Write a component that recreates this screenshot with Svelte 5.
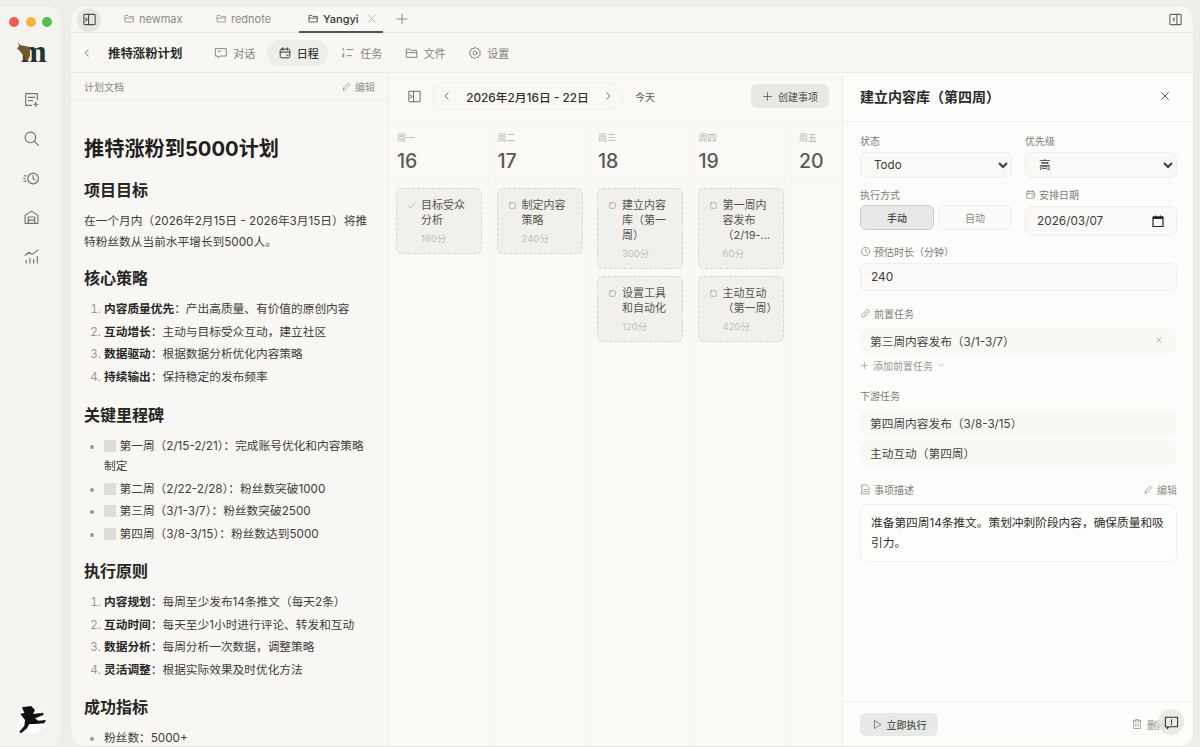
<script>
  const icons = {
    panelL: '<rect x="2" y="2.5" width="12" height="11" rx="1"/><path d="M7 2.5v11M4 6.5 5.5 8 4 9.5"/>',
    panelR: '<rect x="2" y="2.5" width="12" height="11" rx="1"/><path d="M9.5 2.5v11M7 6.5 5.5 8 7 9.5"/>',
    folder: '<path d="M1.5 12.5v-9h4l1.5 1.5h6.5v7.5z"/><path d="M1.5 7.5h12"/>',
    x: '<path d="m3.5 3.5 9 9M12.5 3.5l-9 9"/>',
    plus: '<path d="M8 2.5v11M2.5 8h11"/>',
    left: '<path d="M10 3 5 8l5 5"/>',
    right: '<path d="m6 3 5 5-5 5"/>',
    down: '<path d="m3.5 6 4.5 4.5L12.5 6"/>',
    chat: '<path d="M2 3h12v8.5H6.5L4.5 13.5v-2H2zM4.5 6h3"/>',
    cal: '<rect x="2.5" y="3.5" width="11" height="10" rx="1.5"/><path d="M5.5 2v3M10.5 2v3M2.5 7h11M10 10.5h1.5"/>',
    tasks: '<path d="M2.5 2.5V5M2 9h1.5v1.5H2v2h1.5M7 4h7M7 11h5"/>',
    gear: '<circle cx="8" cy="8" r="2.2"/><path d="M8 1.5 9.6 3l2.2-.2.5 2.100 1.900 1.100L13.400 8l.8 2-1.900 1.100-.5 2.100-2.200-.2L8 14.500 6.400 13l-2.200.2-.5-2.100L1.800 10l.8-2-.8-2 1.900-1.100.5-2.100 2.200.2z"/>',
    pencil: '<path d="m3 13 .6-3L10.8 2.8l2.4 2.4L6 12.4z"/>',
    check: '<path d="m2.5 8.500 3.500 3.500 7.500-8.500"/>',
    square: '<rect x="3" y="3" width="10" height="10" rx="1"/>',
    note: '<path d="M13.5 8V2.500h-11v11H8M5 6h6M5 9h4M12 10.500v4M10 12.500h4"/>',
    search: '<circle cx="7" cy="7" r="5"/><path d="m11 11 3.500 3.500"/>',
    history: '<circle cx="9.500" cy="8" r="5"/><path d="M9.500 5v3l2 1.500M1 5.500h2M.5 8h1.500M1 10.500h2"/>',
    archive: '<path d="M2 13.500V6l6-4 6 4v7.500zM5 13.500v-6h6v6M5 10.500h6"/>',
    chart: '<path d="m2 7 3.500-3 3 2L14 2M3 14v-2.500M6.500 14v-4M10 14v-3M13.500 14V8"/>',
    clock: '<circle cx="8" cy="8" r="6"/><path d="M8 4.500V8l2.500 1.500"/>',
    link: '<path d="M6.500 9.500a2.500 2.500 0 0 0 3.500 0l3-3A2.500 2.500 0 0 0 9.500 3L8 4.500M9.500 6.500a2.500 2.500 0 0 0-3.500 0l-3 3A2.500 2.500 0 0 0 6.500 13L8 11.500"/>',
    doc: '<path d="M3 1.500h6.500L13 5v9.500H3zM5.500 8h5M5.500 11h5"/>',
    play: '<path d="M4 2.500 13 8l-9 5.500z"/>',
    trash: '<path d="M2.500 4h11M6 4V2h4v2M3.500 4v10h9V4M6.500 7v4M9.500 7v4"/>',
    alert: '<path d="M1.500 2.500h13v10h-9l-2 2v-2h-2zM8 5v3.500M8 10v.5"/>'
  };

  const tabs = [
    { name: "newmax" },
    { name: "rednote" },
    { name: "Yangyi", active: true }
  ];

  const navItems = [
    { icon: "chat", label: "对话" },
    { icon: "cal", label: "日程", active: true },
    { icon: "tasks", label: "任务" },
    { icon: "folder", label: "文件" },
    { icon: "gear", label: "设置" }
  ];

  const strategy = [
    ["内容质量优先", "产出高质量、有价值的原创内容"],
    ["互动增长", "主动与目标受众互动，建立社区"],
    ["数据驱动", "根据数据分析优化内容策略"],
    ["持续输出", "保持稳定的发布频率"]
  ];

  const milestones = [
    "第一周（2/15-2/21）：完成账号优化和内容策略制定",
    "第二周（2/22-2/28）：粉丝数突破1000",
    "第三周（3/1-3/7）：粉丝数突破2500",
    "第四周（3/8-3/15）：粉丝数达到5000"
  ];

  const principles = [
    ["内容规划", "每周至少发布14条推文（每天2条）"],
    ["互动时间", "每天至少1小时进行评论、转发和互动"],
    ["数据分析", "每周分析一次数据，调整策略"],
    ["灵活调整", "根据实际效果及时优化方法"]
  ];

  const days = [
    { week: "周一", date: 16, cards: [{ title: "目标受众分析", min: 180, done: true }] },
    { week: "周二", date: 17, cards: [{ title: "制定内容策略", min: 240 }] },
    {
      week: "周三",
      date: 18,
      cards: [
        { title: "建立内容库（第一周）", min: 300 },
        { title: "设置工具和自动化", min: 120 }
      ]
    },
    {
      week: "周四",
      date: 19,
      cards: [
        { title: "第一周内容发布（2/19-2/25）", min: 60 },
        { title: "主动互动（第一周）", min: 420 }
      ]
    },
    { week: "周五", date: 20, cards: [] }
  ];
</script>

{#snippet icon(name, size = 14, sw = 1.2)}
  <svg class="icon" width={size} height={size} viewBox="0 0 16 16" fill="none" stroke="currentColor" stroke-width={sw} stroke-linecap="round" stroke-linejoin="round">{@html icons[name]}</svg>
{/snippet}

<div class="app">
  <aside class="rail">
    <div class="lights"><i class="red"></i><i class="yellow"></i><i class="green"></i></div>
    <div class="logo">
      <span>m</span>
      <svg width="14" height="18" viewBox="0 0 14 18"><path d="M1 0l2 3 5 1 5 1v9l-2 4H8l-1-5-2-1-3-4-2-1 2-3z" fill="#6b5a32"/></svg>
    </div>
    <div class="rail-icons">
      {#each ["note", "search", "history", "archive", "chart"] as name}
        <div class="rail-icon">{@render icon(name, 17, 1.1)}</div>
      {/each}
    </div>
    <div class="avatar">
      <svg width="30" height="30" viewBox="0 0 30 30">
        <circle cx="15.7" cy="15.7" r="13" fill="#fff"/>
        <path d="M6 2.300 15 1l4 4-2 4 10-1.300.7 2.300-8.700 3.300 3.300 2.400 7.700-.7-1.700 3.300-9.300.7h-5.700L11 23.300 5 28.300l-1.700-1.600 5-5.700.7-6-4.700-6 4-1.300z" fill="#111"/>
      </svg>
    </div>
  </aside>

  <main class="main">
    <div class="tabbar">
      <button class="side-toggle">{@render icon("panelL", 15, 1.2)}</button>
      <div class="tabs">
        {#each tabs as tab}
          <div class="tab" class:active={tab.active}>
            {@render icon("folder", 11, 1.1)}
            <span>{tab.name}</span>
            {#if tab.active}<span class="tab-x">{@render icon("x", 13, 0.9)}</span>{/if}
          </div>
        {/each}
        <span class="tab-add">{@render icon("plus", 14, 1)}</span>
      </div>
      <span class="right-toggle">{@render icon("panelR", 15, 1.2)}</span>
    </div>

    <div class="toolbar">
      <span class="back">{@render icon("left", 10, 1.3)}</span>
      <strong class="plan-title">推特涨粉计划</strong>
      <nav class="nav">
        {#each navItems as item}
          <div class="nav-item" class:active={item.active}>
            {@render icon(item.icon, 14, 1.1)}
            <span>{item.label}</span>
          </div>
        {/each}
      </nav>
    </div>

    <div class="panes">
      <section class="doc">
        <header class="doc-head">
          <span>计划文档</span>
          <span class="edit">{@render icon("pencil", 11, 1.1)}编辑</span>
        </header>
        <article class="doc-body">
          <h1>推特涨粉到5000计划</h1>
          <h2 class="first">项目目标</h2>
          <p>在一个月内（2026年2月15日 - 2026年3月15日）将推特粉丝数从当前水平增长到5000人。</p>
          <h2 class="after-p">核心策略</h2>
          <ol>
            {#each strategy as [head, rest]}
              <li><b>{head}</b>：{rest}</li>
            {/each}
          </ol>
          <h2 class="wide">关键里程碑</h2>
          <ul>
            {#each milestones as m}
              <li><i class="box"></i>{m}</li>
            {/each}
          </ul>
          <h2>执行原则</h2>
          <ol>
            {#each principles as [head, rest]}
              <li><b>{head}</b>：{rest}</li>
            {/each}
          </ol>
          <h2>成功指标</h2>
          <ul>
            <li>粉丝数：5000+</li>
          </ul>
        </article>
      </section>

      <section class="calendar">
        <div class="cal-bar">
          <span class="cal-toggle">{@render icon("panelL", 15, 1.1)}</span>
          <div class="range">
            <span>{@render icon("left", 10, 1.3)}</span>
            <b>2026年2月16日 - 22日</b>
            <span>{@render icon("right", 10, 1.3)}</span>
          </div>
          <span class="today">今天</span>
          <button class="create">{@render icon("plus", 11, 1.1)}创建事项</button>
        </div>
        <div class="week">
          {#each days as day}
            <div class="day">
              <div class="day-head">
                <span>{day.week}</span>
                <b>{day.date}</b>
              </div>
              <div class="day-cards">
                {#each day.cards as card}
                  <div class="card">
                    <span class="card-mark">{@render icon(card.done ? "check" : "square", 9, 1)}</span>
                    <div class="card-text">
                      <div class="card-title">{card.title}</div>
                      <div class="card-min">{card.min}分</div>
                    </div>
                  </div>
                {/each}
              </div>
            </div>
          {/each}
        </div>
      </section>

      <section class="detail">
        <header class="detail-head">
          <h3>建立内容库（第四周）</h3>
          {@render icon("x", 12, 1.3)}
        </header>
        <div class="detail-body">
          <div class="two">
            <div>
              <div class="label">状态</div>
              <select class="field-select"><option>Todo</option><option>Doing</option><option>Done</option></select>
            </div>
            <div>
              <div class="label">优先级</div>
              <select class="field-select"><option>高</option><option>中</option><option>低</option></select>
            </div>
          </div>
          <div class="two second">
            <div>
              <div class="label">执行方式</div>
              <div class="modes">
                <button class="mode on">手动</button>
                <button class="mode">自动</button>
              </div>
            </div>
            <div>
              <div class="label">{@render icon("cal", 11, 1)}安排日期</div>
              <div class="date-field">
                <span>2026/03/07</span>
                <svg width="12" height="12" viewBox="0 0 12 12"><path d="M1 2h10v9.500H1z" fill="none" stroke="#222" stroke-width="1.2"/><path d="M1 1.500h10V4H1zM3 .5h1v2H3zM8 .5h1v2H8z" fill="#222"/></svg>
              </div>
            </div>
          </div>

          <div class="label minutes">{@render icon("clock", 11, 1)}预估时长（分钟）</div>
          <input class="number" value="240" />

          <div class="label pre">{@render icon("link", 11, 1)}前置任务</div>
          <div class="dep">
            <span>第三周内容发布（3/1-3/7）</span>
            <span class="dep-x">{@render icon("x", 8, 1.2)}</span>
          </div>
          <div class="add-dep">{@render icon("plus", 9, 1.2)}添加前置任务{@render icon("down", 8, 1.2)}</div>

          <div class="label next">下游任务</div>
          <div class="dep"><span>第四周内容发布（3/8-3/15）</span></div>
          <div class="dep gap"><span>主动互动（第四周）</span></div>

          <div class="label desc">
            <span class="label-left">{@render icon("doc", 11, 1)}事项描述</span>
            <span class="edit">{@render icon("pencil", 11, 1.1)}编辑</span>
          </div>
          <div class="desc-box">准备第四周14条推文。策划冲刺阶段内容，确保质量和吸引力。</div>
        </div>
        <footer class="detail-foot">
          <button class="run">{@render icon("play", 11, 1)}立即执行</button>
          <span class="delete">{@render icon("trash", 12, 1)}删除</span>
        </footer>
      </section>
    </div>

    <button class="feedback">{@render icon("alert", 15, 1.1)}</button>
  </main>
</div>

<style>
  :global(body) {
    margin: 0;
    background: #efeeea;
  }

  .app {
    display: flex;
    width: 1200px;
    height: 747px;
    overflow: hidden;
    color: #2b2b29;
    font-family: Inter, "Noto Sans CJK SC", sans-serif;
    font-size: 11.7px;
  }

  .icon {
    flex: none;
    display: block;
  }

  button {
    font-family: inherit;
    border: none;
    padding: 0;
    cursor: pointer;
  }

  /* left rail */
  .rail {
    width: 63px;
    flex: none;
    margin-top: 5px;
    display: flex;
    flex-direction: column;
    align-items: center;
    background: #f4f3ef;
    border: 1px solid #ebeae6;
    border-left: none;
    border-radius: 0 14px 14px 0;
    box-sizing: border-box;
  }

  .lights {
    display: flex;
    gap: 6.5px;
    margin-top: 11px;
    margin-right: 1px;
  }

  .lights i {
    width: 10px;
    height: 10px;
    border-radius: 50%;
  }

  .red { background: #ee5c54; }
  .yellow { background: #f3b340; }
  .green { background: #56bd52; }

  .logo {
    position: relative;
    width: 31px;
    height: 26px;
    margin-top: 14px;
    text-align: right;
    font: bold 31px/22px "Liberation Serif", serif;
    color: #22352d;
  }

  .logo svg {
    position: absolute;
    left: 1px;
    top: 1px;
  }

  .rail-icons {
    margin-top: 13px;
    color: #75746f;
  }

  .rail-icon {
    height: 39.25px;
    display: flex;
    align-items: center;
  }

  .avatar {
    margin-top: auto;
    margin-bottom: 11px;
    height: 30px;
  }

  /* main window */
  .main {
    position: relative;
    flex: 1;
    margin: 5px 6px 0 7px;
    height: 742px;
    display: flex;
    flex-direction: column;
    background: #f8f7f4;
    border: 1px solid #e9e8e4;
    border-radius: 14px;
    box-sizing: border-box;
    overflow: hidden;
  }

  .tabbar {
    flex: none;
    height: 26px;
    display: flex;
    align-items: center;
    border-bottom: 1px solid #ecebe7;
  }

  .side-toggle {
    width: 24px;
    height: 24px;
    margin: 1px 0 0 6px;
    border-radius: 50%;
    background: #e7e6e2;
    color: #45524b;
    display: flex;
    align-items: center;
    justify-content: center;
  }

  .tabs {
    display: flex;
    height: 100%;
    align-items: stretch;
    margin-left: 14px;
    flex: 1;
  }

  .tab {
    display: flex;
    align-items: center;
    gap: 4px;
    padding: 0 9px;
    width: 84px;
    box-sizing: border-box;
    color: #8a8984;
    font-size: 11px;
    margin-right: 8px;
    border-bottom: 2px solid transparent;
    height: 27px;
  }

  .tab.active {
    color: #2f3a34;
    font-weight: 500;
    border-bottom-color: #43594c;
  }

  .tab-x {
    color: #a9a8a3;
    margin-left: 2px;
  }

  .tab-add {
    align-self: center;
    color: #807f7a;
    margin-left: 4px;
  }

  .right-toggle {
    margin-right: 10px;
    color: #66655f;
  }

  .toolbar {
    flex: none;
    height: 40px;
    display: flex;
    align-items: center;
    box-sizing: border-box;
    border-bottom: 1px solid #ecebe7;
    padding-left: 11px;
  }

  .back {
    color: #5f5e59;
  }

  .plan-title {
    margin-left: 16px;
    font-size: 12.4px;
    font-weight: 600;
    color: #2b2b29;
  }

  .nav {
    display: flex;
    gap: 2.5px;
    margin-left: 21px;
  }

  .nav-item {
    width: 61px;
    height: 26px;
    box-sizing: border-box;
    padding-left: 11px;
    display: flex;
    align-items: center;
    gap: 5px;
    border-radius: 13px;
    font-size: 11px;
    color: #83827d;
  }

  .nav-item.active {
    background: #eeedea;
    color: #2e3a33;
    font-weight: 500;
  }

  .panes {
    flex: 1;
    min-height: 0;
    display: flex;
  }

  /* plan document */
  .doc {
    width: 318px;
    flex: none;
    box-sizing: border-box;
    border-right: 1px solid #ecebe7;
    overflow: hidden;
  }

  .doc-head {
    height: 28px;
    box-sizing: border-box;
    padding: 0 13px;
    display: flex;
    align-items: center;
    justify-content: space-between;
    border-bottom: 1px solid #efeeea;
    font-size: 10px;
    color: #8a8984;
  }

  .edit {
    display: inline-flex;
    align-items: center;
    gap: 3px;
    font-size: 10px;
    font-weight: 400;
    color: #8f8e89;
  }

  .doc-body {
    padding: 0 17px 0 13px;
  }

  h1 {
    margin: 33.5px 0 0;
    font-size: 20.2px;
    line-height: 28px;
    font-weight: 700;
    color: #1f1f1d;
  }

  h2 {
    margin: 15.5px 0 0;
    font-size: 16px;
    line-height: 24px;
    font-weight: 600;
    color: #262624;
  }

  h2.first {
    margin-top: 15px;
  }

  h2.after-p {
    margin-top: 13.5px;
  }

  h2.wide {
    margin-top: 16.5px;
  }

  p {
    margin: 9px 0 0;
    line-height: 21px;
    color: #3d3d3a;
  }

  ol, ul {
    margin: 9px 0 0;
    padding-left: 20px;
    display: flex;
    flex-direction: column;
    gap: 2.5px;
    color: #3d3d3a;
  }

  li {
    line-height: 20px;
  }

  li::marker {
    color: #9a9994;
  }

  li b {
    font-weight: 600;
    color: #282826;
  }

  .box {
    display: inline-block;
    width: 12px;
    height: 12px;
    margin-right: 3.5px;
    vertical-align: -2px;
    background: #dcdcda;
    border-radius: 1px;
  }

  /* calendar */
  .calendar {
    width: 453px;
    flex: none;
    display: flex;
    flex-direction: column;
    background: #faf9f6;
    overflow: hidden;
  }

  .cal-bar {
    height: 49px;
    flex: none;
    display: flex;
    align-items: center;
    padding: 0 13px 2px 18px;
    border-bottom: 1px solid #f3f2ee;
    box-sizing: border-box;
  }

  .cal-toggle {
    color: #6f6e69;
  }

  .range {
    width: 191px;
    height: 28px;
    margin-left: 10px;
    box-sizing: border-box;
    padding: 0 9px;
    display: flex;
    align-items: center;
    justify-content: space-between;
    border: 1px solid #f0efeb;
    border-radius: 14px;
    color: #55544f;
  }

  .range b {
    font-size: 11.8px;
    font-weight: 500;
    color: #2f2f2c;
  }

  .today {
    margin-left: 12px;
    font-size: 10px;
    color: #5c5b56;
  }

  .create {
    margin-left: auto;
    width: 78px;
    height: 24px;
    display: flex;
    align-items: center;
    justify-content: center;
    gap: 5px;
    background: #e8e9e5;
    border-radius: 6px;
    font-size: 10px;
    color: #454f49;
  }

  .week {
    flex: 1;
    display: flex;
  }

  .day {
    width: 100.5px;
    flex: none;
    box-sizing: border-box;
    border-right: 1px solid #f4f3ef;
  }

  .day-head {
    height: 59px;
    box-sizing: border-box;
    padding: 10px 0 0 8px;
    border-bottom: 1px solid #f4f3ef;
    display: flex;
    flex-direction: column;
  }

  .day-head span {
    font-size: 9px;
    line-height: 12px;
    color: #b5b4af;
  }

  .day-head b {
    margin-top: 5px;
    font-size: 19.5px;
    line-height: 24px;
    font-weight: 500;
    color: #5b5a56;
  }

  .day-cards {
    padding: 7px 7px 0;
    display: flex;
    flex-direction: column;
    gap: 7px;
  }

  .card {
    display: flex;
    gap: 5px;
    width: 86px;
    box-sizing: border-box;
    padding: 9px 7px 7px 10px;
    background: #f1f0ed;
    border: 1px dashed #d6d5d1;
    border-radius: 6px;
  }

  .card-mark {
    margin-top: 3px;
    color: #8f8e89;
  }

  .card-text {
    min-width: 0;
  }

  .card-title {
    font-size: 11px;
    line-height: 15px;
    color: #55544f;
    display: -webkit-box;
    -webkit-box-orient: vertical;
    -webkit-line-clamp: 3;
    overflow: hidden;
  }

  .card-min {
    margin-top: 4px;
    font-size: 9.5px;
    line-height: 14px;
    color: #bfbeb9;
  }

  /* task detail */
  .detail {
    flex: 1;
    min-width: 0;
    display: flex;
    flex-direction: column;
    background: #fcfcfa;
    border-left: 1px solid #efeeea;
  }

  .detail-head {
    flex: none;
    height: 49px;
    box-sizing: border-box;
    padding: 0 22px 2px 17px;
    display: flex;
    align-items: center;
    justify-content: space-between;
    border-bottom: 1px solid #f0efeb;
    color: #55544f;
  }

  h3 {
    margin: 0;
    font-size: 14px;
    font-weight: 600;
    color: #2b2b29;
  }

  .detail-body {
    flex: 1;
    padding: 12px 16px 0 17px;
  }

  .label {
    display: flex;
    align-items: center;
    gap: 3px;
    height: 14px;
    box-sizing: border-box;
    padding-bottom: 2px;
    font-size: 10px;
    color: #7e7d78;
  }

  .two {
    display: grid;
    grid-template-columns: 152px 152px;
    gap: 13px;
  }

  .two.second {
    margin-top: 10px;
  }

  .field-select {
    width: 100%;
    height: 26px;
    margin-top: 4px;
    padding-left: 9px;
    background: #faf9f7;
    border: 1px solid #efeeea;
    border-radius: 7px;
    color: #3d3d3a;
    font-family: inherit;
    font-size: 11.6px;
  }

  .modes {
    display: flex;
    gap: 4px;
    margin-top: 3px;
  }

  .mode {
    flex: 1;
    height: 25px;
    padding-bottom: 1px;
    background: #fafaf8;
    border: 1px solid #efeeea;
    border-radius: 6px;
    font-size: 10px;
    color: #8a8984;
  }

  .mode.on {
    background: #e8e9e6;
    border-color: #c9cbc6;
    color: #3f4a44;
    font-weight: 500;
  }

  .date-field {
    height: 30px;
    margin-top: 4px;
    box-sizing: border-box;
    padding: 0 12px 0 11px;
    display: flex;
    align-items: center;
    justify-content: space-between;
    background: #faf9f7;
    border: 1px solid #efeeea;
    border-radius: 7px;
    color: #3d3d3a;
    font-size: 11.8px;
  }

  .minutes {
    margin-top: 9px;
  }

  .number {
    display: block;
    width: 100%;
    height: 28px;
    margin-top: 4px;
    box-sizing: border-box;
    padding: 0 10px;
    background: #faf9f7;
    border: 1px solid #f0efeb;
    border-radius: 7px;
    outline: none;
    color: #3d3d3a;
    font-family: inherit;
    font-size: 11.8px;
  }

  .pre {
    margin-top: 16px;
  }

  .dep {
    height: 26px;
    margin-top: 7px;
    box-sizing: border-box;
    padding: 0 14px 2px 10px;
    display: flex;
    align-items: center;
    justify-content: space-between;
    background: #f8f8f5;
    border-radius: 7px;
    color: #44443f;
  }

  .dep.gap {
    margin-top: 4px;
  }

  .dep-x {
    color: #8f8e89;
  }

  .add-dep {
    display: flex;
    align-items: center;
    gap: 4px;
    height: 14px;
    margin-top: 4px;
    font-size: 10px;
    color: #9a9994;
  }

  .next {
    margin-top: 17px;
  }

  .desc {
    margin-top: 17px;
    justify-content: space-between;
  }

  .label-left {
    display: flex;
    align-items: center;
    gap: 3px;
  }

  .desc-box {
    height: 58px;
    margin-top: 7px;
    box-sizing: border-box;
    padding: 9px 8px 9px 10px;
    line-height: 19.5px;
    background: #fdfdfb;
    border: 1px solid #f0efeb;
    border-radius: 7px;
    color: #2f2f2c;
  }

  .detail-foot {
    flex: none;
    height: 45px;
    box-sizing: border-box;
    padding: 0 26px 0 17px;
    display: flex;
    align-items: center;
    justify-content: space-between;
    border-top: 1px solid #f0efeb;
  }

  .run {
    width: 78px;
    height: 23px;
    display: flex;
    align-items: center;
    justify-content: center;
    gap: 4px;
    background: #e8e9e6;
    border-radius: 6px;
    font-size: 10px;
    font-weight: 500;
    color: #4a544e;
  }

  .delete {
    display: flex;
    align-items: center;
    gap: 4px;
    font-size: 10px;
    color: #8f8e89;
  }

  .feedback {
    position: absolute;
    right: 9px;
    bottom: 11px;
    width: 26px;
    height: 26px;
    border-radius: 50%;
    background: rgba(230, 230, 226, 0.85);
    color: #2c2c2a;
    display: flex;
    align-items: center;
    justify-content: center;
  }
</style>
